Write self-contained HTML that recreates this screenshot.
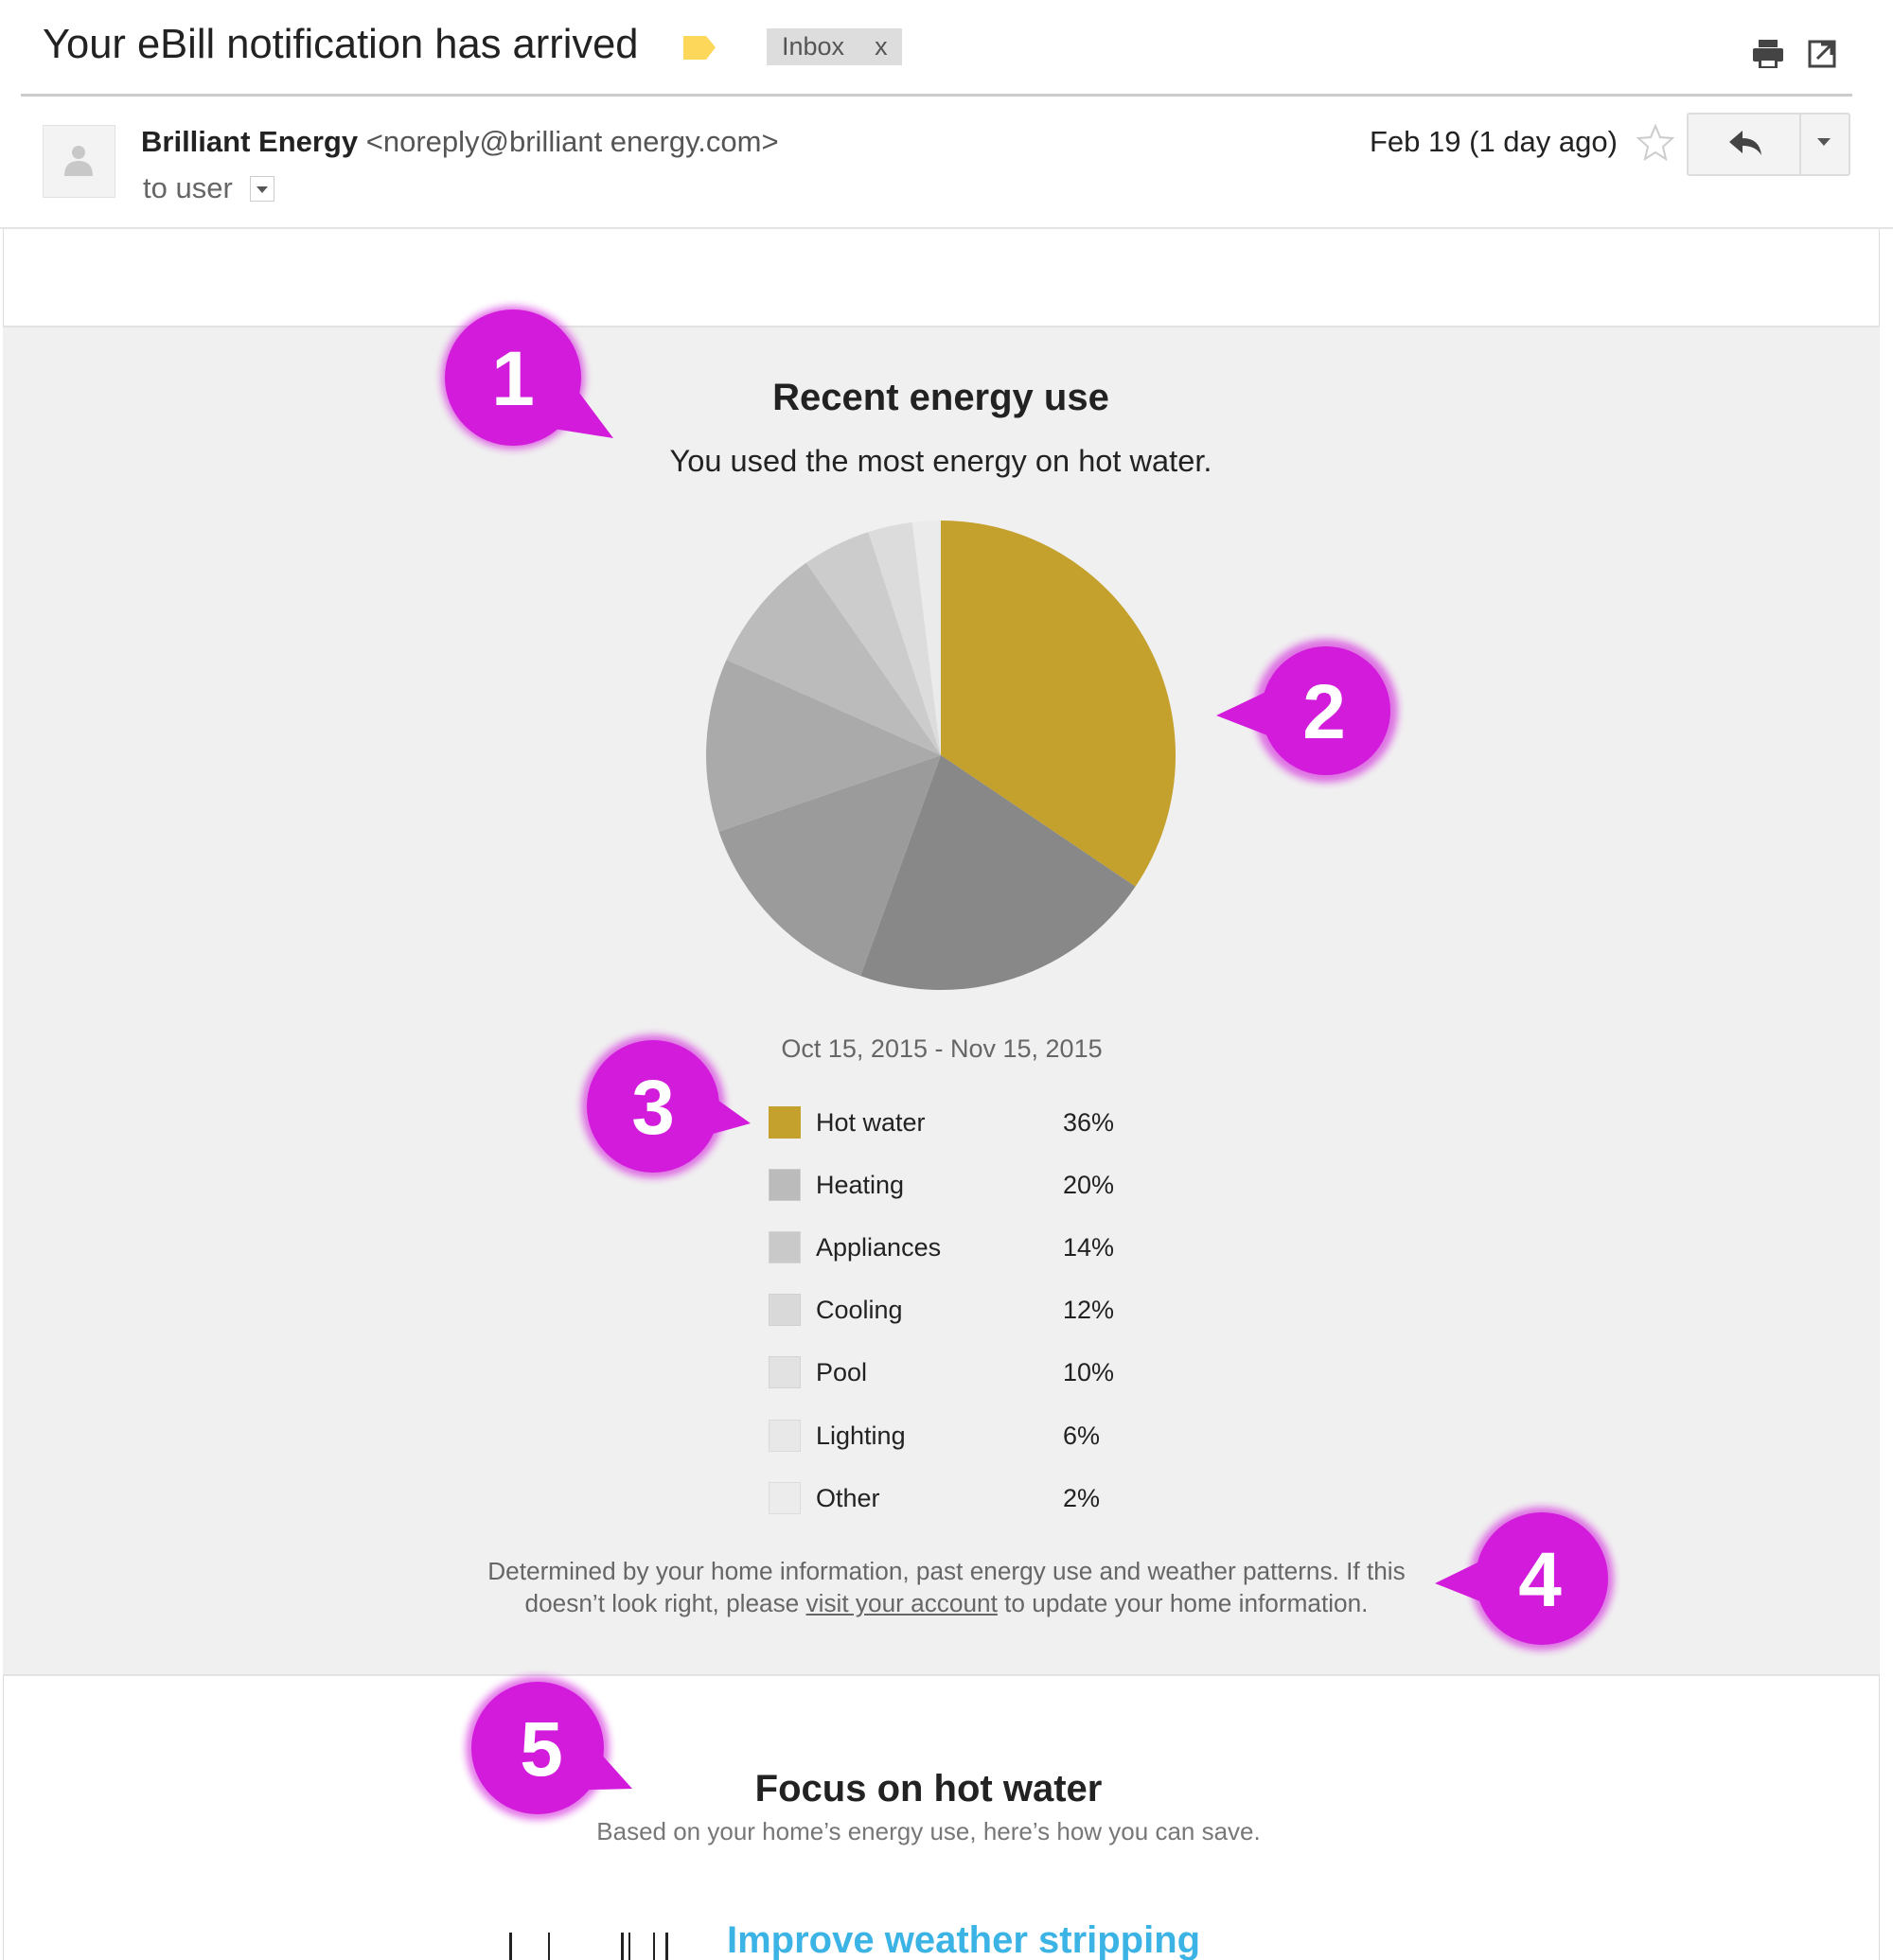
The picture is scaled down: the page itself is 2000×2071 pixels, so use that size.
<!DOCTYPE html>
<html><head><meta charset="utf-8"><style>
html,body{margin:0;padding:0;width:2000px;height:2071px;overflow:hidden;background:#fff;font-family:"Liberation Sans",Arial,sans-serif;}
.a{position:absolute;white-space:nowrap;}
</style></head><body>
<div style="position:relative;width:2000px;height:2071px;">
<div class="a" style="left:45px;top:23px;font-size:43.5px;color:#222;">Your eBill notification has arrived</div>
<svg class="a" style="left:720px;top:36px" width="40" height="30"><path d="M2 2 H26 L36 14 L26 27 H2 Z" fill="#fcd75a"/></svg>
<div class="a" style="left:810px;top:30px;width:143px;height:39px;background:#ddd;font-size:27px;color:#555;line-height:39px;"><span style="margin-left:16px">Inbox</span><span style="margin-left:32px">x</span></div>
<svg class="a" style="left:1850px;top:40px" width="36" height="34"><rect x="8" y="2" width="20" height="8" fill="#444"/><rect x="2" y="11" width="32" height="14" rx="2" fill="#444"/><rect x="8" y="21" width="20" height="11" fill="#444"/><rect x="11" y="24" width="14" height="6" fill="#fff"/></svg>
<svg class="a" style="left:1910px;top:40px" width="30" height="32"><rect x="2" y="4" width="26" height="26" fill="none" stroke="#444" stroke-width="3"/><path d="M10 22 L24 8 M14 7 H25 V18" stroke="#444" stroke-width="3" fill="none"/></svg>
<div class="a" style="left:22px;top:99px;width:1935px;height:3px;background:#ccc;"></div>
<div class="a" style="left:45px;top:132px;width:75px;height:75px;background:#f3f3f3;border:1px solid #e2e2e2;"></div>
<svg class="a" style="left:64px;top:150px" width="38" height="40"><circle cx="19" cy="11" r="7" fill="#c8c8c8"/><path d="M4 36 Q4 20 19 20 Q34 20 34 36 Z" fill="#c8c8c8"/></svg>
<div class="a" style="left:149px;top:132px;font-size:31px;color:#222;"><b>Brilliant Energy</b> <span style="color:#555">&lt;noreply@brilliant energy.com&gt;</span></div>
<div class="a" style="left:151px;top:181px;font-size:31px;color:#666;">to user</div>
<div class="a" style="left:264px;top:186px;width:26px;height:27px;border:1px solid #ccc;box-sizing:border-box;"></div>
<svg class="a" style="left:269px;top:195px" width="16" height="10"><path d="M2 2 H14 L8 9Z" fill="#555"/></svg>
<div class="a" style="left:1447px;top:132px;font-size:31px;color:#222;">Feb 19 (1 day ago)</div>
<svg class="a" style="left:1729px;top:130px" width="40" height="40"><path d="M20 3 L25 15 L38 16 L28 25 L31 38 L20 31 L9 38 L12 25 L2 16 L15 15 Z" fill="none" stroke="#ccc" stroke-width="2"/></svg>
<div class="a" style="left:1782px;top:119px;width:173px;height:67px;background:#f3f3f3;border:2px solid #ddd;box-sizing:border-box;border-radius:3px;"></div>
<div class="a" style="left:1901px;top:121px;width:2px;height:63px;background:#ddd;"></div>
<svg class="a" style="left:1825px;top:136px" width="40" height="32"><path d="M16 2 L2 14 L16 26 V18 Q30 18 36 28 Q34 10 16 10 Z" fill="#444"/></svg>
<svg class="a" style="left:1918px;top:144px" width="20" height="12"><path d="M2 2 H16 L9 10Z" fill="#555"/></svg>
<div class="a" style="left:0;top:240px;width:2000px;height:2px;background:#e4e4e4;"></div>
<div class="a" style="left:3px;top:242px;width:1983px;height:1829px;border-left:1px solid #ddd;border-right:1px solid #ddd;box-sizing:border-box;"></div>
<div class="a" style="left:3px;top:344px;width:1983px;height:1427px;background:#f0f0f0;border-top:2px solid #e2e2e2;border-bottom:2px solid #e2e2e2;box-sizing:border-box;"></div>
<div class="a" style="left:0;width:1988px;top:398px;text-align:center;font-size:40px;font-weight:bold;color:#222;">Recent energy use</div>
<div class="a" style="left:0;width:1988px;top:468px;text-align:center;font-size:32.6px;color:#222;">You used the most energy on hot water.</div>
<svg class="a" style="left:0;top:0" width="2000" height="1100">
<path d="M994 798 L994 550 A248 248 0 0 1 1199.6 936.7 Z" fill="#c4a02c"/>
<path d="M994 798 L1199.6 936.7 A248 248 0 0 1 909.2 1031.1 Z" fill="#888"/>
<path d="M994 798 L909.2 1031.1 A248 248 0 0 1 759.5 878.7 Z" fill="#9b9b9b"/>
<path d="M994 798 L759.5 878.7 A248 248 0 0 1 767.5 697.1 Z" fill="#aaa"/>
<path d="M994 798 L767.5 697.1 A248 248 0 0 1 851.7 594.8 Z" fill="#bbb"/>
<path d="M994 798 L851.7 594.8 A248 248 0 0 1 917.4 562.1 Z" fill="#ccc"/>
<path d="M994 798 L917.4 562.1 A248 248 0 0 1 963.8 551.9 Z" fill="#dcdcdc"/>
<path d="M994 798 L963.8 551.9 A248 248 0 0 1 994 550 Z" fill="#ebebeb"/>
</svg>
<div class="a" style="left:0;width:1990px;top:1093px;text-align:center;font-size:27px;color:#666;">Oct 15, 2015 - Nov 15, 2015</div>
<div class="a" style="left:812px;top:1169px;font-size:27px;color:#222;line-height:34px;">
<div style="position:relative;height:66px"><span style="position:absolute;left:0;top:0;width:34px;height:34px;background:#c4a02c"></span><span style="position:absolute;left:50px">Hot water</span><span style="position:absolute;left:311px">36%</span></div>
<div style="position:relative;height:66px"><span style="position:absolute;left:0;top:0;width:34px;height:34px;background:#bbb;box-shadow:inset 0 0 0 1px #ccc"></span><span style="position:absolute;left:50px">Heating</span><span style="position:absolute;left:311px">20%</span></div>
<div style="position:relative;height:66px"><span style="position:absolute;left:0;top:0;width:34px;height:34px;background:#c9c9c9;box-shadow:inset 0 0 0 1px #d4d4d4"></span><span style="position:absolute;left:50px">Appliances</span><span style="position:absolute;left:311px">14%</span></div>
<div style="position:relative;height:66px"><span style="position:absolute;left:0;top:0;width:34px;height:34px;background:#d9d9d9;box-shadow:inset 0 0 0 1px #d0d0d0"></span><span style="position:absolute;left:50px">Cooling</span><span style="position:absolute;left:311px">12%</span></div>
<div style="position:relative;height:67px"><span style="position:absolute;left:0;top:0;width:34px;height:34px;background:#e2e2e2;box-shadow:inset 0 0 0 1px #d4d4d4"></span><span style="position:absolute;left:50px">Pool</span><span style="position:absolute;left:311px">10%</span></div>
<div style="position:relative;height:66px"><span style="position:absolute;left:0;top:0;width:34px;height:34px;background:#e8e8e8;box-shadow:inset 0 0 0 1px #dadada"></span><span style="position:absolute;left:50px">Lighting</span><span style="position:absolute;left:311px">6%</span></div>
<div style="position:relative;height:66px"><span style="position:absolute;left:0;top:0;width:34px;height:34px;background:#ececec;box-shadow:inset 0 0 0 1px #dcdcdc"></span><span style="position:absolute;left:50px">Other</span><span style="position:absolute;left:311px">2%</span></div>
</div>
<div class="a" style="left:0;width:2000px;top:1643px;text-align:center;font-size:26.2px;color:#666;line-height:34px;">Determined by your home information, past energy use and weather patterns. If this<br>doesn’t look right, please <span style="text-decoration:underline">visit your account</span> to update your home information.</div>
<div class="a" style="left:0;width:1962px;top:1868px;text-align:center;font-size:40px;font-weight:bold;color:#222;">Focus on hot water</div>
<div class="a" style="left:0;width:1962px;top:1920px;text-align:center;font-size:26px;color:#777;">Based on your home’s energy use, here’s how you can save.</div>
<div class="a" style="left:768px;top:2028px;font-size:40px;font-weight:bold;color:#3bb4e5;">Improve weather stripping</div>
<div class="a" style="left:538px;top:2042px;width:3px;height:29px;background:#222"></div>
<div class="a" style="left:579px;top:2042px;width:2px;height:29px;background:#222"></div>
<div class="a" style="left:656px;top:2042px;width:3px;height:29px;background:#222"></div>
<div class="a" style="left:664px;top:2042px;width:2px;height:29px;background:#222"></div>
<div class="a" style="left:690px;top:2042px;width:2px;height:29px;background:#222"></div>
<div class="a" style="left:703px;top:2042px;width:3px;height:29px;background:#222"></div>
<svg class="a" style="left:0;top:0" width="2000" height="2071">
<defs><filter id="g" x="-30%" y="-30%" width="160%" height="160%"><feGaussianBlur stdDeviation="4"/></filter></defs>
<g fill="#d21bdb">
<g><circle cx="542" cy="399" r="76" filter="url(#g)" opacity="0.6"/><circle cx="542" cy="399" r="72"/><polygon points="648,463 568,356 516,442"/></g>
<g><circle cx="1401" cy="751" r="76" filter="url(#g)" opacity="0.6"/><circle cx="1401" cy="751" r="68"/><polygon points="1285,756 1401,701 1401,801"/></g>
<g><circle cx="690" cy="1169" r="76" filter="url(#g)" opacity="0.6"/><circle cx="690" cy="1169" r="70"/><polygon points="793,1187 681,1218 699,1120"/></g>
<g><circle cx="1629" cy="1668" r="76" filter="url(#g)" opacity="0.6"/><circle cx="1629" cy="1668" r="70"/><polygon points="1516,1673 1629,1618 1629,1718"/></g>
<g><circle cx="568" cy="1847" r="76" filter="url(#g)" opacity="0.6"/><circle cx="568" cy="1847" r="70"/><polygon points="668,1890 548,1893 588,1801"/></g>
</g>
<g fill="#fff" font-family="Liberation Sans, Arial, sans-serif" font-size="82" font-weight="bold" text-anchor="middle">
<text x="542" y="428">1</text>
<text x="1399" y="780">2</text>
<text x="690" y="1198">3</text>
<text x="1627" y="1697">4</text>
<text x="572" y="1876">5</text>
</g>
</svg>
</div>
</body></html>
